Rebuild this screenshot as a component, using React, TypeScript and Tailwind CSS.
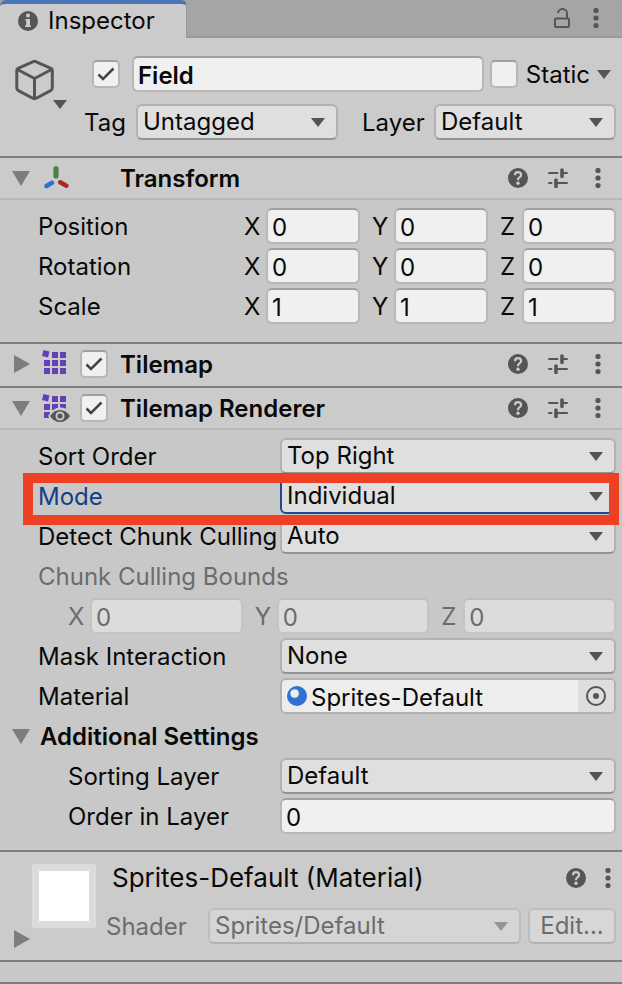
import { useState, type ReactNode } from "react";
import clsx from "clsx";

/* ---------- Icons ---------- */

function Caret({ className }: { className?: string }) {
  return (
    <svg viewBox="0 0 14 9" className={clsx("h-[9px] w-[14px] shrink-0", className)} aria-hidden="true">
      <path d="M0 0h14L7 9z" fill="#55554d" />
    </svg>
  );
}

function InfoIcon() {
  return (
    <svg viewBox="0 0 20 20" className="size-5 shrink-0" aria-hidden="true">
      <circle cx="10" cy="10" r="10" fill="#555" />
      <circle cx="10" cy="4.6" r="2" fill="#cbcbcb" />
      <path d="M7.400 8H12v6.400h1V16H7v-1.600h1.200V9.600h-.8z" fill="#cbcbcb" />
    </svg>
  );
}

function LockIcon() {
  return (
    <svg viewBox="0 0 20 24" className="h-6 w-5" fill="none" stroke="#555" strokeWidth="2" aria-hidden="true">
      <rect x="3" y="12.500" width="14" height="8.500" rx="1" />
      <path d="M15 12.500V8A4.500 4.500 0 0 0 6 7" />
    </svg>
  );
}

function DotsIcon() {
  return (
    <svg viewBox="0 0 20 20" className="size-5" fill="#555" aria-hidden="true">
      <circle cx="10" cy="2.500" r="2.600" />
      <circle cx="10" cy="10" r="2.600" />
      <circle cx="10" cy="17.500" r="2.600" />
    </svg>
  );
}

function HelpIcon() {
  return (
    <svg viewBox="0 0 20 20" className="size-5" aria-hidden="true">
      <circle cx="10" cy="10" r="10" fill="#555" />
      <path
        d="M7 7.200C7 5.300 8.300 4.200 10 4.200s3.100 1.100 3.100 2.700c0 2.300-3.100 2.400-3.100 4.800v.5"
        fill="none"
        stroke="#cbcbcb"
        strokeWidth="2.200"
      />
      <circle cx="10" cy="15.200" r="1.700" fill="#cbcbcb" />
    </svg>
  );
}

function PresetIcon() {
  return (
    <svg viewBox="0 0 20 20" className="size-5" stroke="#555" strokeLinecap="round" aria-hidden="true">
      <path d="M1 5h8.500M15 5h4M1 15h2.500M9 15h10" strokeWidth="2" />
      <path d="M14 2v6.500M8 12v6.500" strokeWidth="3.600" />
    </svg>
  );
}

function CubeIcon() {
  return (
    <svg
      viewBox="0 0 40 42"
      className="h-[42px] w-10"
      fill="none"
      stroke="#555"
      strokeWidth="3"
      strokeLinejoin="round"
      aria-hidden="true"
    >
      <path d="M18.300 2.600a3 3 0 0 1 2.400 0L36 9.300a2 2 0 0 1 1.300 1.900V29a3 3 0 0 1-1.700 2.600L20.800 39.500a3 3 0 0 1-2.600 0L3.400 31.600A3 3 0 0 1 1.800 29V11.200A2 2 0 0 1 3 9.300z" />
      <path d="M2.500 10.500l17 9 17-9M19.500 19.500v20" />
    </svg>
  );
}

function TransformIcon() {
  return (
    <svg viewBox="0 0 28 28" className="size-7" strokeLinecap="round" fill="none" aria-hidden="true">
      <path d="M14 4.500V12" stroke="#4a8243" strokeWidth="5.200" />
      <path d="M4.500 22l5.500-3.200" stroke="#3071cf" strokeWidth="4.600" />
      <path d="M18.200 18.300l6.200 3.400" stroke="#ab2a20" strokeWidth="4.600" />
    </svg>
  );
}

function TilemapIcon({ eye }: { eye?: boolean }) {
  return (
    <svg viewBox="0 0 28 28" className="size-7" aria-hidden="true">
      <g fill="#6440b5">
        <path d="M1.500 0l6 1.500L6 7.500 0 6z" />
        <path d="M10 2h6v6h-6zM18 2h6v6h-6zM2 10h6v6H2zM10 10h6v6h-6zM18 10h6v6h-6zM2 18h6v6H2zM10 18h6v6h-6zM18 18h6v6h-6z" />
      </g>
      {eye && (
        <>
          <path d="M6 22Q11 13.500 18 13.500T28 18v10H10z" fill="#cbcbcb" />
          <path d="M8 22q4-6 10-6t10 6q-4 6-10 6T8 22z" fill="#555" />
          <circle cx="18" cy="22" r="4.500" fill="#cbcbcb" />
          <circle cx="18" cy="22" r="2.600" fill="#555" />
        </>
      )}
    </svg>
  );
}

function SphereIcon() {
  return (
    <svg viewBox="0 0 20 20" className="size-5 shrink-0" aria-hidden="true">
      <circle cx="10" cy="10" r="10" fill="#3071cf" />
      <circle cx="7.600" cy="7.600" r="4.800" fill="#6c9ce0" />
      <circle cx="7.600" cy="7.600" r="4" fill="#eee" />
    </svg>
  );
}

function PickerIcon() {
  return (
    <svg viewBox="0 0 20 20" className="size-5" aria-hidden="true">
      <circle cx="10" cy="10" r="9" fill="none" stroke="#555" strokeWidth="2" />
      <circle cx="10" cy="10" r="3" fill="#555" />
    </svg>
  );
}

/* ---------- Controls ---------- */

function Foldout({ open, label }: { open?: boolean; label: string }) {
  return (
    <button type="button" aria-label={label} aria-expanded={!!open} className="flex w-[18px] shrink-0 justify-center">
      <svg viewBox="0 0 18 18" className="size-[18px]" fill="#7d7d7d" aria-hidden="true">
        {open ? <path d="M0 2h18L9 17z" /> : <path d="M2 0v18l16-9z" />}
      </svg>
    </button>
  );
}

function Checkbox({ label, defaultChecked, id }: { label?: string; defaultChecked?: boolean; id?: string }) {
  return (
    <span className="relative flex size-7 shrink-0">
      <input
        id={id}
        type="checkbox"
        aria-label={label}
        defaultChecked={defaultChecked}
        className="peer size-7 appearance-none rounded-[5px] border-2 border-[#b7b7b7] border-t-[#a0a0a0] bg-[#f0f0f0]"
      />
      <svg
        viewBox="0 0 28 28"
        className="pointer-events-none absolute inset-0 hidden size-7 peer-checked:block"
        fill="none"
        stroke="#444"
        strokeWidth="2.500"
        aria-hidden="true"
      >
        <path d="M6.500 14.500l4.500 4.500L21.500 8.500" />
      </svg>
    </span>
  );
}

function TextBox({
  id,
  value,
  disabled,
  bold,
}: {
  id: string;
  value: string;
  disabled?: boolean;
  bold?: boolean;
}) {
  return (
    <input
      id={id}
      type="text"
      defaultValue={value}
      disabled={disabled}
      aria-label={bold ? "Name" : undefined}
      className={clsx(
        "h-9 w-full min-w-0 flex-1 rounded-md border-2 px-1 pt-0.5",
        disabled
          ? "border-[#c4c4c4] border-t-[#bebebe] bg-[#dcdcdc] text-[#6c6c6c]"
          : "border-[#b7b7b7] border-t-[#a0a0a0] bg-[#f0f0f0]",
        bold && "font-semibold"
      )}
    />
  );
}

function Dropdown({
  id,
  options,
  disabled,
  focused,
}: {
  id: string;
  options: string[];
  disabled?: boolean;
  focused?: boolean;
}) {
  return (
    <div className="relative min-w-0 flex-1">
      <select
        id={id}
        disabled={disabled}
        className={clsx(
          "block h-9 w-full appearance-none rounded-md border-2 pr-8 pl-[5px]",
          disabled && "border-[#bdbdbd] border-b-[#b2b2b2] bg-[#d5d5d5] text-[#6c6c6c] opacity-100",
          !disabled && !focused && "border-[#b2b2b2] border-b-[#939393] bg-[#dfdfdf]",
          focused && "border-[#1f4a8f] bg-[#dfdfdf]"
        )}
      >
        {options.map((option) => (
          <option key={option}>{option}</option>
        ))}
      </select>
      <Caret className={clsx("pointer-events-none absolute top-3.5 right-[13px]", disabled && "opacity-50")} />
    </div>
  );
}

function IconButton({ label, children }: { label: string; children: ReactNode }) {
  return (
    <button type="button" aria-label={label} className="flex shrink-0 items-center justify-center">
      {children}
    </button>
  );
}

/* ---------- Layout pieces ---------- */

function Row({
  label,
  htmlFor,
  indent,
  highlight,
  children,
}: {
  label: string;
  htmlFor: string;
  indent?: boolean;
  highlight?: boolean;
  children: ReactNode;
}) {
  return (
    <div className={clsx("flex items-center pr-1.5", highlight && "relative z-10")}>
      <label
        htmlFor={htmlFor}
        className={clsx(
          "w-[280px] shrink-0 overflow-hidden pt-0.5 whitespace-nowrap",
          indent ? "pl-[68px]" : "pl-[38px]",
          highlight && "text-[#123f8c]"
        )}
      >
        {label}
      </label>
      {children}
      {highlight && (
        <div className="pointer-events-none absolute -top-[5px] right-[3px] -bottom-[11px] left-[23px] border-10 border-[#ed4024]" />
      )}
    </div>
  );
}

function VectorFields({ name, value, disabled }: { name: string; value: string; disabled?: boolean }) {
  return (
    <div className="grid min-w-0 flex-1 grid-cols-3 gap-3">
      {["X", "Y", "Z"].map((axis) => (
        <div key={axis} className="flex items-center">
          <label htmlFor={`${name}-${axis}`} className="w-[22px] shrink-0 pt-0.5">
            {axis}
          </label>
          <TextBox id={`${name}-${axis}`} value={value} disabled={disabled} />
        </div>
      ))}
    </div>
  );
}

function ComponentHeader({
  title,
  icon,
  open,
  toggle,
}: {
  title: string;
  icon: ReactNode;
  open?: boolean;
  toggle?: boolean;
}) {
  return (
    <header
      className={clsx(
        "flex h-[42px] items-center border-b-2 bg-[#cbcbcb] pr-3.5 pl-3",
        open ? "border-[#b8b8b8]" : "border-[#cbcbcb]"
      )}
    >
      <Foldout open={open} label={`Toggle ${title}`} />
      <span className="ml-3 shrink-0">{icon}</span>
      <span className="mr-3 ml-2.5 w-7 shrink-0">
        {toggle && <Checkbox label={`Enable ${title}`} defaultChecked />}
      </span>
      <h2 className="flex-1 pt-0.5 font-semibold">{title}</h2>
      <div className="flex gap-5">
        <IconButton label="Help">
          <HelpIcon />
        </IconButton>
        <IconButton label="Presets">
          <PresetIcon />
        </IconButton>
        <IconButton label="More">
          <DotsIcon />
        </IconButton>
      </div>
    </header>
  );
}

export default function App() {
  const [material, setMaterial] = useState("Sprites-Default");

  return (
    <main className="min-h-screen bg-[#c8c8c8] font-['Inter',sans-serif] text-2xl leading-7 text-[#090909]">
      {/* Tab bar */}
      <div className="flex h-[38px] bg-[#a5a5a5]">
        <button
          type="button"
          className="flex w-[187px] items-center gap-2.5 rounded-t-md border-t-4 border-r border-t-[#4875b4] border-r-[#999] bg-[#cbcbcb] pl-[18px]"
        >
          <InfoIcon />
          Inspector
        </button>
        <div className="flex flex-1 items-center justify-end gap-3.5 border-b-2 border-[#999] pr-4">
          <IconButton label="Lock">
            <LockIcon />
          </IconButton>
          <IconButton label="More">
            <DotsIcon />
          </IconButton>
        </div>
      </div>

      {/* Game object */}
      <section className="flex bg-[#cbcbcb] pt-[18px] pr-1.5 pb-4">
        <div className="relative ml-[15px] w-[77px] shrink-0 pt-[3px]">
          <IconButton label="Select icon">
            <CubeIcon />
          </IconButton>
          <Caret className="absolute top-11 left-[38px]" />
        </div>
        <div className="flex min-w-0 flex-1 flex-col gap-3">
          <div className="flex items-center">
            <Checkbox label="Active" defaultChecked />
            <div className="mr-1.5 ml-3 flex min-w-0 flex-1">
              <TextBox id="name" value="Field" bold />
            </div>
            <Checkbox id="static" />
            <label htmlFor="static" className="ml-2 pt-0.5">
              Static
            </label>
            <button type="button" aria-label="Static flags" className="mr-[5px] ml-[7px]">
              <Caret />
            </button>
          </div>
          <div className="-ml-2 flex items-center">
            <label htmlFor="tag" className="w-[52px] shrink-0 pt-0.5">
              Tag
            </label>
            <Dropdown id="tag" options={["Untagged"]} />
            <label htmlFor="layer" className="ml-6 w-[72px] shrink-0 pt-0.5">
              Layer
            </label>
            <div className="flex w-[182px] shrink-0">
              <Dropdown id="layer" options={["Default"]} />
            </div>
          </div>
        </div>
      </section>

      {/* Transform */}
      <section className="border-t-2 border-[#7f7f7f]">
        <ComponentHeader title="Transform" icon={<TransformIcon />} open />
        <div className="flex flex-col gap-1 pt-2 pb-[18px]">
          {[
            ["Position", "0"],
            ["Rotation", "0"],
            ["Scale", "1"],
          ].map(([name, value]) => (
            <div key={name} className="flex items-center pr-1.5 pl-[38px]">
              <span className="w-[206px] shrink-0 pt-0.5">{name}</span>
              <VectorFields name={name} value={value} />
            </div>
          ))}
        </div>
      </section>

      {/* Tilemap */}
      <section className="border-t-2 border-[#7f7f7f]">
        <ComponentHeader title="Tilemap" icon={<TilemapIcon />} toggle />
      </section>

      {/* Tilemap Renderer */}
      <section className="border-t-2 border-[#7f7f7f]">
        <ComponentHeader title="Tilemap Renderer" icon={<TilemapIcon eye />} open toggle />
        <div className="flex flex-col gap-1 pt-2 pb-4">
          <Row label="Sort Order" htmlFor="sort-order">
            <Dropdown id="sort-order" options={["Top Right", "Top Left", "Bottom Right", "Bottom Left"]} />
          </Row>
          <Row label="Mode" htmlFor="mode" highlight>
            <Dropdown id="mode" options={["Individual", "Chunk"]} focused />
          </Row>
          <Row label="Detect Chunk Culling" htmlFor="culling">
            <Dropdown id="culling" options={["Auto", "Manual"]} />
          </Row>
          <p className="flex h-9 items-center pt-0.5 pl-[38px] text-[#6c6c6c]">Chunk Culling Bounds</p>
          <div className="flex pr-1.5 pl-[68px] text-[#6c6c6c]">
            <VectorFields name="bounds" value="0" disabled />
          </div>
          <Row label="Mask Interaction" htmlFor="mask">
            <Dropdown id="mask" options={["None"]} />
          </Row>
          <Row label="Material" htmlFor="material">
            <div className="flex h-9 min-w-0 flex-1 items-center overflow-hidden rounded-md border-2 border-[#b2b2b2] bg-[#ededed] pl-[5px]">
              <SphereIcon />
              <input
                id="material"
                type="text"
                value={material}
                onChange={(e) => setMaterial(e.target.value)}
                className="ml-1 min-w-0 flex-1 pt-1"
              />
              <button
                type="button"
                aria-label="Pick material"
                className="flex w-9 items-center justify-center self-stretch bg-[#dedede]"
              >
                <PickerIcon />
              </button>
            </div>
          </Row>
          <div className="flex h-9 items-center gap-2.5 pl-3">
            <Foldout open label="Toggle Additional Settings" />
            <h3 className="pt-0.5 font-semibold">Additional Settings</h3>
          </div>
          <Row label="Sorting Layer" htmlFor="sorting-layer" indent>
            <Dropdown id="sorting-layer" options={["Default"]} />
          </Row>
          <Row label="Order in Layer" htmlFor="order" indent>
            <TextBox id="order" value="0" />
          </Row>
        </div>
      </section>

      {/* Material */}
      <section className="flex border-y-2 border-[#7f7f7f] bg-[#cbcbcb] pt-3 pr-1.5">
        <div className="flex w-[106px] shrink-0 items-end pb-3 pl-3">
          <Foldout label="Toggle material" />
          <div className="ml-0.5 size-16 self-start border-[7px] border-[#dcdcdc] bg-white" />
        </div>
        <div className="min-w-0 flex-1 pb-4">
          <div className="flex h-7 items-center pl-1.5">
            <h2 className="flex-1 text-[26px]">{material} (Material)</h2>
            <div className="-mr-0.5 flex gap-3">
              <IconButton label="Help">
                <HelpIcon />
              </IconButton>
              <IconButton label="More">
                <DotsIcon />
              </IconButton>
            </div>
          </div>
          <div className="mt-4 flex items-center">
            <label htmlFor="shader" className="w-[102px] shrink-0 pt-0.5 text-[#6c6c6c]">
              Shader
            </label>
            <Dropdown id="shader" options={["Sprites/Default"]} disabled />
            <button
              type="button"
              disabled
              className="ml-[7px] h-9 w-[88px] rounded-md border-2 border-[#bdbdbd] border-b-[#b2b2b2] bg-[#d7d7d7] text-[#6c6c6c]"
            >
              Edit...
            </button>
          </div>
        </div>
      </section>

      <footer className="h-[22px] border-b-2 border-[#7f7f7f]" />
    </main>
  );
}
